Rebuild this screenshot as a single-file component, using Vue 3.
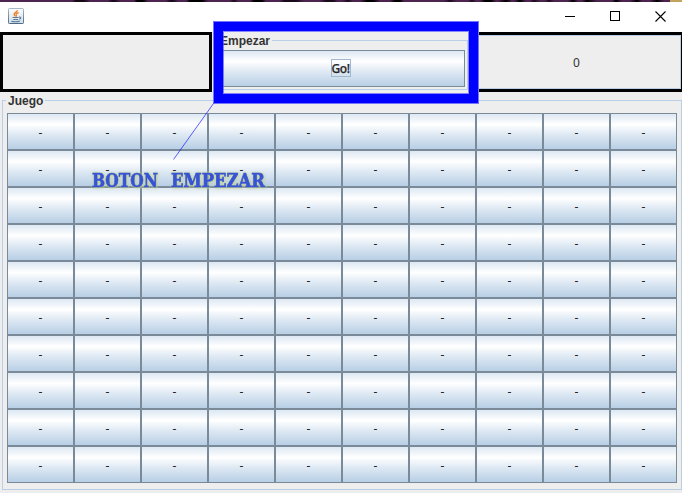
<script setup>
const cells = Array.from({ length: 100 }, (_, i) => i)
</script>

<template>
  <div class="window">
    <div class="backdrop"><i class="tan"></i></div>
    <header class="titlebar">
      <svg class="java" width="16" height="16" viewBox="0 0 16 16">
        <defs>
          <linearGradient id="jg" x1="0" y1="0" x2="0" y2="1">
            <stop offset="0" stop-color="#fdfdfe" />
            <stop offset="1" stop-color="#d3dde6" />
          </linearGradient>
          <linearGradient id="jb" x1="0" y1="0" x2="0" y2="1">
            <stop offset="0" stop-color="#a9b9c8" />
            <stop offset="1" stop-color="#4c6a86" />
          </linearGradient>
        </defs>
        <rect x=".5" y=".5" width="15" height="15" rx=".8" fill="url(#jg)" stroke="url(#jb)" />
        <path d="M9.3 2.2C9.6 4.3 5.3 4.6 6.2 6.8c.3.7.9 1 1 1.7M10.6 4.6C8.6 5.3 7.6 6 8.2 7c.4.6.4 1-.2 1.6" fill="none" stroke="#ee7f22" stroke-width="1.3" />
        <path d="M4.6 9.5h6M5.3 11.5h4.8M3.3 13.3c2.5.6 6.5.5 8.6-.3M11 9.1c2.5-.5 2.3 1.5.3 2.2" fill="none" stroke="#557c9f" stroke-width="1.1" />
      </svg>
      <div class="controls">
        <svg width="11" height="11" shape-rendering="crispEdges"><path d="M0 5.5h10" stroke="#000" /></svg>
        <svg width="11" height="11" shape-rendering="crispEdges"><rect x=".5" y=".5" width="9" height="9" fill="none" stroke="#000" /></svg>
        <svg width="11" height="11"><path d="M.5 .5l10 10M10.5 .5l-10 10" stroke="#000" stroke-width="1.1" /></svg>
      </div>
    </header>
    <section class="top">
      <div class="panel"></div>
      <div class="group start">
        <span class="legend">Empezar</span>
        <button class="metal go"><span class="focus">Go!</span></button>
      </div>
      <div class="panel score"><div class="value">0</div></div>
    </section>
    <section class="group game">
      <span class="legend">Juego</span>
      <div class="board">
        <button v-for="c in cells" :key="c" class="metal">-</button>
      </div>
    </section>
    <div class="frame"><div class="hole"></div></div>
    <svg class="leader" width="44" height="60"><path d="M41.5 1.5L1.5 57.5" stroke="#00f" stroke-opacity=".62" /></svg>
    <svg class="note" width="180" height="24">
      <text x="2" y="18" textLength="66" lengthAdjust="spacingAndGlyphs">BOTON</text>
      <text x="81" y="18" textLength="94" lengthAdjust="spacingAndGlyphs">EMPEZAR</text>
    </svg>
  </div>
</template>

<style>
body { overflow: hidden; }
</style>

<style scoped>
* { box-sizing: border-box; }
.window {
  position: relative;
  width: 682px;
  height: 493px;
  overflow: hidden;
  background: #eee;
  color: #333;
  font: 12px/14px "Liberation Sans", Arial, sans-serif;
}
.backdrop {
  display: flex;
  justify-content: flex-end;
  height: 2px;
  background: linear-gradient(90deg, #4d244f 72px, #130a14 76px 84px, #4d244f 90px 108px, #1a0b1c 112px 115px, #4d244f 120px 134px, #000 137px 143px, #4d244f 148px 166px, #1a0b1c 170px 173px, #4d244f 178px 186px, #000 190px 202px, #4d244f 208px 230px, #1a0b1c 234px, #4d244f 238px 250px, #000 254px 262px, #4d244f 266px 280px, #1a0b1c 284px 296px, #4d244f 304px 320px, #1a0b1c 326px 333px, #4d244f 338px 342px, #1a0b1c 348px, #4d244f 353px 360px, #000 367px 373px, #4d244f 380px 390px, #000 395px 400px, #4d244f 404px 444px, #1a0b1c 450px, #4d244f 456px 468px, #1a0b1c 472px, #4d244f 476px 480px, #000 485px 491px, #4d244f 496px 498px, #000 506px, #4d244f 512px 514px, #000 520px, #4d244f 526px 530px, #1a0b1c 534px, #4d244f 540px 545px, #1a0b1c 549px, #4d244f 554px 568px, #000 573px, #4d244f 578px 582px, #000 587px, #4d244f 597px 612px, #000 616px, #4d244f 622px 630px, #000 637px, #4d244f 642px 650px, #000 657px, #4d244f 664px);
}
.tan { width: 12px; background: #c2a45d; }
.titlebar {
  display: flex;
  justify-content: space-between;
  height: 30px;
  padding: 6px 16px 0 8px;
  background: #fff;
}
.controls { display: flex; gap: 34px; padding-top: 3px; }
.controls svg, .java { display: block; flex: none; }
.top { display: flex; height: 60px; }
.top .start { flex: none; margin-left: 2px; width: 254px; }
.top .score { margin-left: 4px; }
.panel { flex: none; width: 212px; height: 60px; border: 3px solid #000; }
.value {
  height: 54px;
  border: 1px solid #b8cfe5;
  text-align: center;
  font: 12px/54px "Noto Sans", sans-serif;
  padding-right: 3px;
}
.group { border: 1px solid #b8cfe5; }
.legend {
  display: block;
  width: max-content;
  height: 14px;
  margin: -7px 0 0 3px;
  padding: 0 2px;
  background: #eee;
  font-weight: bold;
}
.start { height: 50px; margin-top: 8px; }
.metal {
  display: block;
  margin: 0;
  padding: 2px 0 0 0;
  border: 1px solid #7a8a99;
  border-radius: 0;
  background: linear-gradient(#dde8f3, #fff 30%, #dde8f3 60%, #b8cfe5);
  color: #222;
  font: 12px/14px "Noto Sans", sans-serif;
}
.go {
  display: flex;
  align-items: center;
  justify-content: center;
  width: 247px;
  height: 37px;
  margin: 2px 0 0 3px;
  padding: 0 2px 2px 0;
}
.focus {
  width: 20px;
  height: 18px;
  border: 1px solid #a3b8cc;
  font: 500 12px/18px "Noto Sans", sans-serif;
  letter-spacing: -.4px;
  -webkit-text-stroke: .25px #333;
  white-space: nowrap;
}
.game { width: 680px; height: 390px; margin: 8px 0 0 2px; }
.board {
  display: grid;
  grid-template-columns: repeat(10, 67px);
  grid-auto-rows: 37px;
  margin: 5px 0 0 4px;
}
.frame {
  position: absolute;
  left: 213px;
  top: 21px;
  width: 266px;
  height: 83px;
  border: 1px solid #7474ff;
}
.frame::before {
  content: "";
  position: absolute;
  inset: 0;
  border: 9px solid #00f;
}
.hole { position: absolute; inset: 9px; border: 1px solid rgba(70, 70, 255, .65); }
.leader { position: absolute; left: 172px; top: 102px; }
.note {
  position: absolute;
  left: 90px;
  top: 169px;
  fill: #3753d6;
  stroke: #3753d6;
  stroke-width: .6px;
  font: bold 18px "DejaVu Serif", serif;
  filter: drop-shadow(0 0 1px #c3d18e) drop-shadow(1px 1px 1px rgba(195, 209, 142, .6));
}
</style>
